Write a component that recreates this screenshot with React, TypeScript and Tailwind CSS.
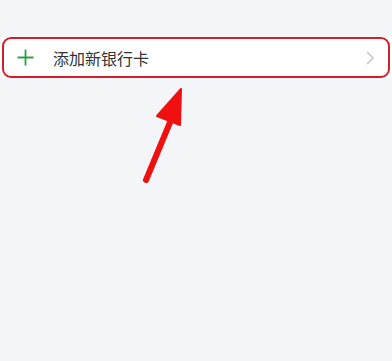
import React from 'react';

export default function App() {
  return (
    <div className="relative w-[392px] h-[361px] bg-[#f4f5f9] overflow-hidden" style={{ fontFamily: '"Noto Sans CJK SC", "Noto Sans", sans-serif' }}>
      <div className="h-[37px]" />
      <div className="bg-white">
        <div className="mx-[2px] h-[41px] border-2 border-[#d0202a] rounded-[9px] flex items-center pl-[13px] pr-[12px]">
          <svg width="17" height="17" viewBox="0 0 17 17" className="mr-[19px]">
            <path d="M8.5 0.5v16M0.5 8.5h16" stroke="#2ea043" strokeWidth="1.8" />
          </svg>
          <span className="text-[16px] text-[#333]">添加新银行卡</span>
          <svg width="10" height="16" viewBox="0 0 10 16" className="ml-auto mr-[1px]">
            <path d="M2 2l6 6-6 6" stroke="#c4c4c4" strokeWidth="1.5" fill="none" />
          </svg>
        </div>
      </div>
      <svg className="absolute left-0 top-0" width="392" height="361" viewBox="0 0 392 361">
        <path d="M146 180L171 120" stroke="#f01010" strokeWidth="6" strokeLinecap="round" />
        <polygon points="181,89 157,116 180,125" fill="#f01010" stroke="#f01010" strokeWidth="2" strokeLinejoin="round" />
      </svg>
    </div>
  );
}
